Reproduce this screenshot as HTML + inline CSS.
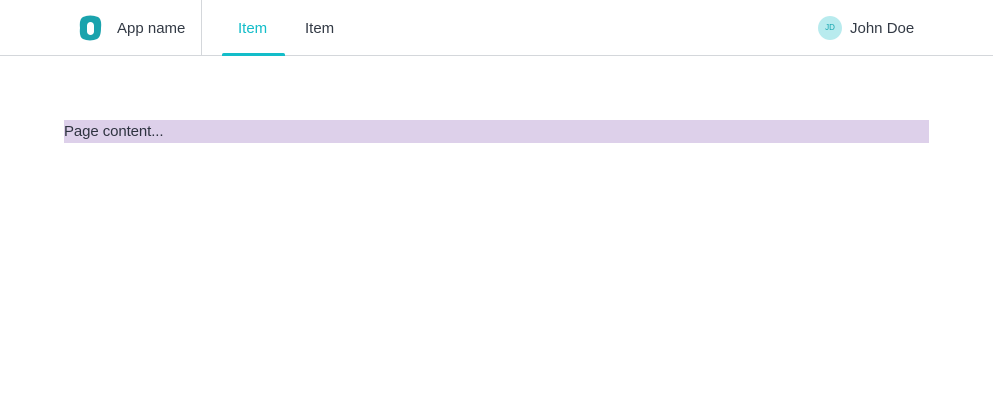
<!DOCTYPE html>
<html><head><meta charset="utf-8"><style>
body{margin:0;width:993px;height:400px;background:#fff;font-family:"Liberation Sans",sans-serif;color:#333a45;position:relative;overflow:hidden}
.hdr{position:absolute;left:0;top:0;width:993px;height:55px;border-bottom:1px solid #d4d7db}
.t{position:absolute;font-size:15px;line-height:20px;top:19px}
.div{position:absolute;left:201px;top:0;width:1px;height:55px;background:#d4d7db}
.ul{position:absolute;left:222px;top:53px;width:63px;height:3px;background:#13bdc9;border-radius:2px 2px 0 0}
.av{position:absolute;left:818px;top:16px;width:24px;height:24px;border-radius:50%;background:#b8ebee;color:#16a6b0;font-size:8px;line-height:24px;text-align:center}
.pc{position:absolute;left:64px;top:120px;width:865px;height:23px;background:#ddd0ea;font-size:15px;line-height:24px;color:#2e3340;letter-spacing:-0.1px}
</style></head><body>
<div class="hdr">
<svg style="position:absolute;left:79px;top:15px" width="23" height="26" viewBox="0 0 23 26"><path d="M4 2 Q11 -1 19 2 Q23 4 22 13 Q22 22 18 24 Q11 27 4 24 Q0 22 1 13 Q0 4 4 2Z" fill="#1aa3ad"/><rect x="8" y="7" width="7" height="13" rx="3.5" fill="#fff"/></svg>
<span class="t" style="left:117px">App name</span>
<div class="div"></div>
<span class="t" style="left:238px;color:#13bdc9">Item</span>
<span class="t" style="left:305px">Item</span>
<div class="ul"></div>
<div class="av">JD</div>
<span class="t" style="left:850px">John Doe</span>
</div>
<div class="pc">Page content...</div>
</body></html>
